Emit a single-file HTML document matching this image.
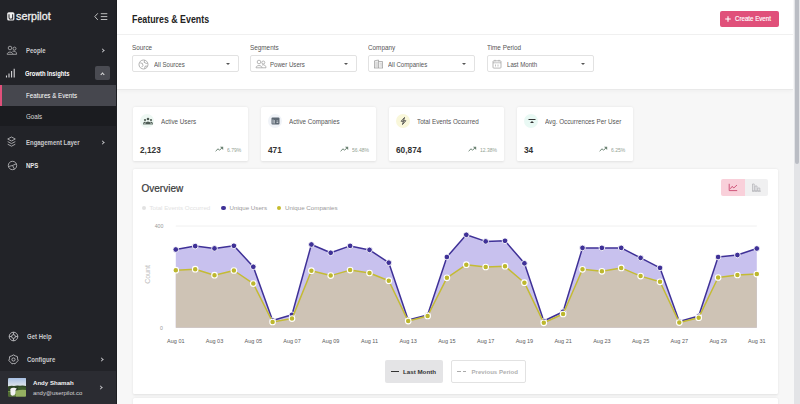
<!DOCTYPE html>
<html><head><meta charset="utf-8">
<style>
*{margin:0;padding:0;box-sizing:border-box}
html,body{width:800px;height:404px;overflow:hidden;background:#f7f7f7;font-family:"Liberation Sans",sans-serif}
.a{position:absolute;white-space:nowrap}
#sb{position:absolute;left:0;top:0;width:117px;height:404px;background:#222328}
.nav{position:absolute;left:25.7px;font-size:6.5px;font-weight:bold;color:#c9c9cc;line-height:8px;transform:scaleX(0.92);transform-origin:0 0}
.chev{position:absolute;width:3px;height:3px;border-right:1px solid #c0c0c4;border-top:1px solid #c0c0c4;transform:rotate(45deg)}
#hdr{position:absolute;left:117px;top:0;width:676px;height:88.5px;background:#fff;box-shadow:0 1px 0 #e9e9e9,0 2px 4px rgba(0,0,0,.04)}
.lbl{position:absolute;font-size:6.7px;color:#555;line-height:8px;transform:scaleX(0.95);transform-origin:0 0}
.sel{position:absolute;top:55px;width:107px;height:17px;border:1px solid #e2e2e2;border-radius:2px;background:#fff}
.sel span{position:absolute;left:21px;top:5px;font-size:7px;color:#555;line-height:8px;transform:scaleX(0.87);transform-origin:0 0}
.caret{position:absolute;right:8px;top:7px;width:0;height:0;border-left:2.2px solid transparent;border-right:2.2px solid transparent;border-top:2.5px solid #555}
.card{position:absolute;top:107px;width:115px;height:54px;background:#fff;border-radius:1.5px;box-shadow:0 0.5px 2.5px rgba(0,0,0,.09)}
.card .ic{position:absolute;left:6.6px;top:6.6px;width:14.5px;height:14.5px;border-radius:50%}
.card .t{position:absolute;left:27.6px;top:10.8px;font-size:6.5px;color:#555;line-height:8px;transform:scaleX(0.965);transform-origin:0 0}
.card .v{position:absolute;left:7px;font-size:8.3px;font-weight:bold;color:#333;line-height:10px}
.card .p{position:absolute;font-size:5.8px;color:#94a394;line-height:6px;transform:scaleX(0.87);transform-origin:0 0}
#scroll{position:absolute;left:793px;top:0;width:7px;height:404px;background:#e3e4e7;border-left:1px solid #f7f7f8}
#thumb{position:absolute;left:794.6px;top:0;width:4.3px;height:164px;background:#babdc4;border-radius:0 0 2.3px 2.3px}
</style></head>
<body>
<div id="sb">
  <!-- logo -->
  <svg class="a" style="left:7.3px;top:12.3px" width="8" height="9" viewBox="0 0 8 9"><rect x="0.2" y="0.2" width="7.2" height="8.3" rx="1.6" fill="#f0f0f0"/><path d="M2 2.2 V5.6 Q2 7.3 3.8 7.3 Q5.6 7.3 5.6 5.6 V2.2" fill="none" stroke="#3a3a3e" stroke-width="1.1"/><path d="M5.6 5 V7.4" stroke="#3a3a3e" stroke-width="1.1"/></svg>
  <div class="a" style="left:15.6px;top:10.3px;font-size:11px;color:#f0f0f0;line-height:13px;-webkit-text-stroke:0.3px #f0f0f0;transform:scaleX(0.98);transform-origin:0 0">serpilot</div>
  <!-- collapse -->
  <svg class="a" style="left:93px;top:12px" width="16" height="10" viewBox="0 0 16 10">
    <path d="M4.8 1.3 L1.8 4.6 L4.8 7.9" fill="none" stroke="#d0d0d0" stroke-width="0.9"/>
    <path d="M7.8 1.7H14.3M7.8 4.6H14.3M7.8 7.5H14.3" stroke="#d0d0d0" stroke-width="0.9"/>
  </svg>
  <!-- People -->
  <svg class="a" style="left:6px;top:45px" width="12" height="11" viewBox="0 0 12 11">
    <circle cx="4" cy="3" r="1.8" fill="none" stroke="#b5b5b8" stroke-width="0.8"/>
    <circle cx="8.5" cy="3.6" r="1.5" fill="none" stroke="#b5b5b8" stroke-width="0.8"/>
    <path d="M1.2 9.3 C1.2 6.3 6.8 6.3 6.8 9.3 Z" fill="none" stroke="#b5b5b8" stroke-width="0.8"/>
    <path d="M6.5 6.3 C8.5 5.6 10.6 6.6 10.6 9.3 H6.8" fill="none" stroke="#b5b5b8" stroke-width="0.8"/>
  </svg>
  <div class="nav" style="top:46.5px">People</div>
  <div class="chev" style="left:100.5px;top:49.2px"></div>
  <!-- Growth insights -->
  <svg class="a" style="left:5px;top:68px" width="11" height="11" viewBox="0 0 11 11">
    <path d="M1.5 9.5V7.5M4 9.5V5.5M6.6 9.5V3M9.2 9.5V0.8" stroke="#d8d8da" stroke-width="1.1"/>
  </svg>
  <div class="nav" style="top:70px;color:#fff;left:24.6px;transform:scaleX(0.9)">Growth Insights</div>
  <div class="a" style="left:95px;top:66.2px;width:14.6px;height:14.3px;background:#4a4b52;border-radius:2px"></div>
  <div class="chev" style="left:100.8px;top:73px;transform:rotate(-45deg);border-color:#e0e0e0"></div>
  <!-- Features & Events active -->
  <div class="a" style="left:0;top:85.2px;width:117px;height:20.6px;background:#46474e"></div>
  <div class="a" style="left:0;top:85.2px;width:2px;height:20.6px;background:#e0507a"></div>
  <div class="nav" style="top:92px;color:#fff;font-weight:normal;font-size:6.6px;transform:scaleX(0.94)">Features &amp; Events</div>
  <!-- Goals -->
  <div class="a" style="left:0;top:105.8px;width:117px;height:20.4px;background:#1b1c20"></div>
  <div class="nav" style="top:112.5px;color:#d8d8d8;font-weight:normal;font-size:6.6px;transform:scaleX(0.94)">Goals</div>
  <!-- Engagement -->
  <svg class="a" style="left:7px;top:136px" width="10" height="12" viewBox="0 0 10 12">
    <path d="M4.5 1 L8.3 3 L4.5 5 L0.7 3 Z" fill="none" stroke="#c0c0c3" stroke-width="0.8"/>
    <path d="M0.7 5.6 L4.5 7.6 L8.3 5.6" fill="none" stroke="#c0c0c3" stroke-width="0.8"/>
    <path d="M0.7 8.2 L4.5 10.2 L8.3 8.2" fill="none" stroke="#c0c0c3" stroke-width="0.8"/>
  </svg>
  <div class="nav" style="top:139px">Engagement Layer</div>
  <div class="chev" style="left:100.5px;top:140.5px"></div>
  <!-- NPS -->
  <svg class="a" style="left:7px;top:159.5px" width="11" height="11" viewBox="0 0 11 11">
    <circle cx="5.5" cy="5.5" r="4.2" fill="none" stroke="#c0c0c3" stroke-width="0.8"/>
    <path d="M5.5 5.5 L9.3 3.8 M5.5 5.5 L7.5 9.2 M5.5 5.5 L1.5 6.5" stroke="#c0c0c3" stroke-width="0.8"/>
  </svg>
  <div class="nav" style="top:161.5px;color:#e8e8e8">NPS</div>
  <!-- Get help -->
  <svg class="a" style="left:8px;top:331px" width="11" height="11" viewBox="0 0 11 11">
    <circle cx="5.5" cy="5.5" r="4.3" fill="none" stroke="#c0c0c3" stroke-width="0.9"/>
    <circle cx="5.5" cy="5.5" r="1.9" fill="none" stroke="#c0c0c3" stroke-width="0.9"/>
    <path d="M5.5 1.2V3.6M5.5 7.4V9.8M1.2 5.5H3.6M7.4 5.5H9.8" stroke="#c0c0c3" stroke-width="0.9"/>
  </svg>
  <div class="nav" style="top:333px;left:27px">Get Help</div>
  <!-- Configure -->
  <svg class="a" style="left:8px;top:354px" width="11" height="11" viewBox="0 0 11 11">
    <path d="M5.5 0.9 L7.4 1.9 L9.4 2.6 L9.6 4.8 L10.1 6.6 L8.6 8.1 L7.1 9.8 L5.5 9.5 L3.9 9.8 L2.4 8.1 L0.9 6.6 L1.4 4.8 L1.6 2.6 L3.6 1.9 Z" fill="none" stroke="#c0c0c3" stroke-width="0.9"/>
    <circle cx="5.5" cy="5.5" r="1.6" fill="none" stroke="#c0c0c3" stroke-width="0.9"/>
  </svg>
  <div class="nav" style="top:355.5px;left:27px">Configure</div>
  <div class="chev" style="left:100px;top:358px"></div>
  <!-- user -->
  <div class="a" style="left:0;top:371px;width:117px;height:33px;background:#2b2c32"></div>
  <svg class="a" style="left:7.9px;top:378.2px" width="18.4" height="18.7" viewBox="0 0 18.4 18.7">
    <defs><clipPath id="av"><rect width="18.4" height="18.7" rx="1.5"/></clipPath>
    <linearGradient id="sky" x1="0" y1="0" x2="0" y2="1"><stop offset="0" stop-color="#a8c0e4"/><stop offset="1" stop-color="#e2e6ea"/></linearGradient></defs>
    <g clip-path="url(#av)">
      <rect width="18.4" height="18.7" fill="#6f8f45"/>
      <rect width="18.4" height="8.5" fill="url(#sky)"/>
      <path d="M0 8.5 Q3 7.2 6 8 Q9 7 12 7.8 Q15 7.3 18.4 8 V13 H0Z" fill="#2e4526"/>
      <path d="M10 9 Q14 8.5 18.4 9.5 V12 H10Z" fill="#3d5a2c"/>
      <path d="M8 12.5 Q13 11.5 18.4 12 V18.7 H8Z" fill="#95b061"/>
      <path d="M0 14 H6 V18.7 H0Z" fill="#4f6a33"/>
      <path d="M2.3 11 Q4 9.2 6.5 9.8 L8.8 10.6 L7.6 12 L7.5 15.5 Q6.5 18 4 17.8 L2.6 16.5 Z" fill="#f2f2f2"/>
    </g>
  </svg>
  <div class="a" style="left:33px;top:379px;font-size:6.1px;font-weight:bold;color:#f2f2f2;line-height:8px">Andy Shamah</div>
  <div class="a" style="left:33px;top:388.5px;font-size:5.95px;color:#d5d5d8;line-height:8px">andy@userpilot.co</div>
  <div class="chev" style="left:99.2px;top:385.7px"></div>
  <div class="a" style="left:115.6px;top:0;width:1.4px;height:404px;background:#1d1e22"></div>
</div>
<div style="position:absolute;left:117px;top:0;width:1px;height:404px;background:#f8f8f8"></div>

<!-- header -->
<div id="hdr">
  <div class="a" style="left:15px;top:13.8px;font-size:10.4px;font-weight:bold;color:#222;line-height:12px;transform:scaleX(0.85);transform-origin:0 0">Features &amp; Events</div>
  <div class="a" style="left:0;top:33.5px;width:677px;height:1px;background:#f0f0f0"></div>
  <div class="a" style="left:602.5px;top:11px;width:59.5px;height:15.5px;background:#e0507a;border-radius:2px"></div>
  <svg class="a" style="left:607px;top:14.6px" width="8" height="8" viewBox="0 0 8 8"><path d="M4 1.2V6.8M1.2 4H6.8" stroke="#fff" stroke-width="1.1"/></svg>
  <div class="a" style="left:618px;top:14.6px;font-size:6.7px;color:#fff;line-height:8px;transform:scaleX(0.92);transform-origin:0 0;-webkit-text-stroke:0.15px #fff">Create Event</div>

  <div class="lbl" style="left:15px;top:43.5px">Source</div>
  <div class="lbl" style="left:133px;top:43.5px">Segments</div>
  <div class="lbl" style="left:251px;top:43.5px">Company</div>
  <div class="lbl" style="left:370px;top:43.5px">Time Period</div>
</div>
<div class="sel" style="left:132px"><span>All Sources</span><div class="caret"></div>
  <svg class="a" style="left:4.5px;top:2.8px" width="11" height="11" viewBox="0 0 10 10"><circle cx="5" cy="5" r="4.1" fill="none" stroke="#999" stroke-width="0.7"/><path d="M2 3.5 L4 4 L4.5 6 L3.2 7.5 M6 1.3 L5.5 3 L7.5 4 L8.8 3.8 M6 8.7 L6.5 6.5 L8.5 6.5" fill="none" stroke="#999" stroke-width="0.7"/></svg>
</div>
<div class="sel" style="left:250px"><span style="left:18.5px">Power Users</span><div class="caret"></div>
  <svg class="a" style="left:4px;top:3px" width="12" height="10" viewBox="0 0 12 10"><circle cx="4" cy="3" r="1.8" fill="none" stroke="#999" stroke-width="0.7"/><circle cx="8.3" cy="3.5" r="1.5" fill="none" stroke="#999" stroke-width="0.7"/><path d="M1 8.8 C1 5.8 7 5.8 7 8.8 Z M7 6 C9 5.3 11 6.3 11 8.8 H7" fill="none" stroke="#999" stroke-width="0.7"/></svg>
</div>
<div class="sel" style="left:368px"><span style="left:19px">All Companies</span><div class="caret"></div>
  <svg class="a" style="left:4px;top:3px" width="12" height="10" viewBox="0 0 12 10"><path d="M1.5 9V1.8L5.5 1V9M5.5 2.5H9.5V9M1 9H10" fill="#eee" stroke="#999" stroke-width="0.7"/><path d="M3 3V8M4.2 3V8M7 4V8M8.2 4V8" stroke="#bbb" stroke-width="0.5"/></svg>
</div>
<div class="sel" style="left:487px;width:106.5px"><span style="left:19px">Last Month</span><div class="caret"></div>
  <svg class="a" style="left:4px;top:3px" width="10" height="10" viewBox="0 0 10 10"><rect x="1" y="1.8" width="8" height="7.3" rx="0.8" fill="none" stroke="#999" stroke-width="0.7"/><path d="M1 3.8H9M3 0.8V2.5M7 0.8V2.5M3.5 5.5V7.5M6 5.5V7.5" stroke="#999" stroke-width="0.6"/></svg>
</div>

<!-- metric cards -->
<div class="card" style="left:133px">
  <div class="ic" style="background:#eef8f3"></div>
  <svg class="a" style="left:9.5px;top:10px" width="10" height="8" viewBox="0 0 10 8"><circle cx="5" cy="2" r="1.3" fill="#4d5b53"/><circle cx="2" cy="3" r="1.1" fill="#4d5b53"/><circle cx="8" cy="3" r="1.1" fill="#4d5b53"/><path d="M2.5 7 C2.5 3.8 7.5 3.8 7.5 7Z M0 7 C0 4.8 2.5 4.5 3 5.2 M10 7 C10 4.8 7.5 4.5 7 5.2" fill="#4d5b53"/><path d="M0 7H10" stroke="#4d5b53" stroke-width="0.8"/></svg>
  <div class="t">Active Users</div>
  <div class="v" style="top:37.6px">2,123</div>
  <svg class="a" style="left:82px;top:38.5px" width="9" height="6" viewBox="0 0 9 6"><path d="M0.6 5.2 L3 2.8 L4.6 4.2 L7.2 1.6" fill="none" stroke="#6a8272" stroke-width="1"/><path d="M5 0.8 H8.2 V4 Z" fill="#6a8272"/></svg>
  <div class="p" style="left:94px;top:39.5px">6.79%</div>
</div>
<div class="card" style="left:261px">
  <div class="ic" style="background:#f0f3f8"></div>
  <svg class="a" style="left:10px;top:9.5px" width="9" height="8" viewBox="0 0 9 8"><rect x="0.5" y="0.5" width="8" height="7" rx="1" fill="#5d6873"/><path d="M2 2.5V6.5M3.3 3V6.5M5.5 4H7.3M5.5 5.5H7.3" stroke="#e8ecf0" stroke-width="0.7"/></svg>
  <div class="t">Active Companies</div>
  <div class="v" style="top:37.6px">471</div>
  <svg class="a" style="left:79px;top:38.5px" width="9" height="6" viewBox="0 0 9 6"><path d="M0.6 5.2 L3 2.8 L4.6 4.2 L7.2 1.6" fill="none" stroke="#6a8272" stroke-width="1"/><path d="M5 0.8 H8.2 V4 Z" fill="#6a8272"/></svg>
  <div class="p" style="left:91px;top:39.5px">56.48%</div>
</div>
<div class="card" style="left:389px">
  <div class="ic" style="background:#f9f7da"></div>
  <svg class="a" style="left:11px;top:9.5px" width="7" height="8" viewBox="0 0 7 8"><path d="M4.5 0.5 L1.2 4.3 H3.5 L2.5 7.5 L5.8 3.7 H3.5 Z" fill="none" stroke="#444" stroke-width="0.9" stroke-linejoin="round"/></svg>
  <div class="t">Total Events Occurred</div>
  <div class="v" style="top:37.6px">60,874</div>
  <svg class="a" style="left:79px;top:38.5px" width="9" height="6" viewBox="0 0 9 6"><path d="M0.6 5.2 L3 2.8 L4.6 4.2 L7.2 1.6" fill="none" stroke="#6a8272" stroke-width="1"/><path d="M5 0.8 H8.2 V4 Z" fill="#6a8272"/></svg>
  <div class="p" style="left:91px;top:39.5px">12.38%</div>
</div>
<div class="card" style="left:517px;width:116px">
  <div class="ic" style="background:#e9f9f4"></div>
  <svg class="a" style="left:11px;top:9.5px" width="8" height="8" viewBox="0 0 8 8"><path d="M0.5 2.5H7.5" stroke="#333" stroke-width="1"/><path d="M2 6 L4 4 L6 6Z" fill="#333"/></svg>
  <div class="t">Avg. Occurrences Per User</div>
  <div class="v" style="top:37.6px">34</div>
  <svg class="a" style="left:82px;top:38.5px" width="9" height="6" viewBox="0 0 9 6"><path d="M0.6 5.2 L3 2.8 L4.6 4.2 L7.2 1.6" fill="none" stroke="#6a8272" stroke-width="1"/><path d="M5 0.8 H8.2 V4 Z" fill="#6a8272"/></svg>
  <div class="p" style="left:94px;top:39.5px">6.25%</div>
</div>

<!-- chart card -->
<div class="a" style="left:132.5px;top:169.4px;width:645.7px;height:224.6px;background:#fff;border-radius:1.5px;box-shadow:0 0.5px 2.5px rgba(0,0,0,.09)"></div>
<div class="a" style="left:141.5px;top:182.5px;font-size:10px;color:#3a3a3a;line-height:12px;-webkit-text-stroke:0.2px #3a3a3a">Overview</div>
<div class="a" style="left:721px;top:178.8px;width:24px;height:16.8px;background:#f9d0da;border-radius:2px 0 0 2px"></div>
<div class="a" style="left:745px;top:178.8px;width:23.3px;height:16.8px;background:#f0f0f1;border-radius:0 2px 2px 0"></div>
<svg class="a" style="left:727px;top:182px" width="12" height="10" viewBox="0 0 12 10"><path d="M2.2 1.8V8.6H10.2" fill="none" stroke="#c9486f" stroke-width="0.9"/><path d="M3.4 6.8 L5 4.4 L6.9 5.9 L10 3" fill="none" stroke="#c9486f" stroke-width="0.9"/></svg>
<svg class="a" style="left:751px;top:182px" width="12" height="10" viewBox="0 0 12 10"><path d="M1.5 2H3.2V9H1.5Z M4 4H6V9H4Z M6.8 6H8.8V9H6.8Z" fill="none" stroke="#b0b0b4" stroke-width="0.7"/><path d="M1 9.2H10" stroke="#b0b0b4" stroke-width="0.7"/></svg>
<!-- legend -->
<div class="a" style="left:142px;top:205.9px;width:4.4px;height:4.4px;border-radius:50%;background:#e2e2e2"></div>
<div class="a" style="left:149.4px;top:204.4px;font-size:6.2px;color:#e2e2e2;line-height:7px">Total Events Occurred</div>
<div class="a" style="left:221.3px;top:205.9px;width:4.4px;height:4.4px;border-radius:50%;background:#3f3197"></div>
<div class="a" style="left:229.5px;top:204.4px;font-size:6.2px;color:#9a9a9a;line-height:7px">Unique Users</div>
<div class="a" style="left:276.6px;top:205.9px;width:4.4px;height:4.4px;border-radius:50%;background:#c6bc2e"></div>
<div class="a" style="left:285px;top:204.4px;font-size:6.2px;color:#9a9a9a;line-height:7px">Unique Companies</div>

<svg id="chart" class="a" style="left:0;top:0" width="800" height="404" viewBox="0 0 800 404">
<line x1="175.8" y1="226.0" x2="756.8" y2="226.0" stroke="#ececec" stroke-width="0.8"/>
<text x="159" y="228" font-size="5.2" fill="#999" text-anchor="middle" font-family="Liberation Sans">400</text>
<text x="161.5" y="330" font-size="5.2" fill="#999" text-anchor="middle" font-family="Liberation Sans">0</text>
<text x="150" y="274.5" font-size="7" fill="#bdbdbd" text-anchor="middle" font-family="Liberation Sans" transform="rotate(-90 150 274.5)">Count</text>
<polygon points="175.8,327.7 175.8,249.5 195.2,246.1 214.5,248.4 233.9,245.8 253.3,266.8 272.6,320.5 292.0,314.8 311.4,244.5 330.7,252.8 350.1,245.9 369.5,249.9 388.8,262.7 408.2,320.0 427.6,315.0 446.9,257.0 466.3,234.8 485.7,241.4 505.0,240.8 524.4,263.3 543.8,321.0 563.1,311.7 582.5,247.9 601.9,247.9 621.2,247.9 640.6,257.9 660.0,267.9 679.3,321.5 698.7,316.0 718.1,257.0 737.4,255.0 756.8,248.5 756.8,327.7" fill="#c8c1ee"/>
<polygon points="175.8,327.7 175.8,270.2 195.2,269.2 214.5,275.2 233.9,270.5 253.3,283.6 272.6,322.0 292.0,318.6 311.4,270.7 330.7,275.6 350.1,270.1 369.5,273.0 388.8,280.7 408.2,321.1 427.6,316.0 446.9,277.8 466.3,264.7 485.7,267.0 505.0,266.2 524.4,282.7 543.8,322.8 563.1,314.0 582.5,269.3 601.9,271.3 621.2,267.9 640.6,276.1 660.0,281.8 679.3,322.6 698.7,317.7 718.1,277.5 737.4,275.0 756.8,274.1 756.8,327.7" fill="#cec3b5"/>
<polyline points="175.8,249.5 195.2,246.1 214.5,248.4 233.9,245.8 253.3,266.8 272.6,320.5 292.0,314.8 311.4,244.5 330.7,252.8 350.1,245.9 369.5,249.9 388.8,262.7 408.2,320.0 427.6,315.0 446.9,257.0 466.3,234.8 485.7,241.4 505.0,240.8 524.4,263.3 543.8,321.0 563.1,311.7 582.5,247.9 601.9,247.9 621.2,247.9 640.6,257.9 660.0,267.9 679.3,321.5 698.7,316.0 718.1,257.0 737.4,255.0 756.8,248.5" fill="none" stroke="#3f3197" stroke-width="1.5" stroke-linejoin="round"/>
<circle cx="175.8" cy="249.5" r="2.85" fill="#3f3197" stroke="#fff" stroke-width="0.9"/>
<circle cx="195.2" cy="246.1" r="2.85" fill="#3f3197" stroke="#fff" stroke-width="0.9"/>
<circle cx="214.5" cy="248.4" r="2.85" fill="#3f3197" stroke="#fff" stroke-width="0.9"/>
<circle cx="233.9" cy="245.8" r="2.85" fill="#3f3197" stroke="#fff" stroke-width="0.9"/>
<circle cx="253.3" cy="266.8" r="2.85" fill="#3f3197" stroke="#fff" stroke-width="0.9"/>
<circle cx="272.6" cy="320.5" r="2.85" fill="#3f3197" stroke="#fff" stroke-width="0.9"/>
<circle cx="292.0" cy="314.8" r="2.85" fill="#3f3197" stroke="#fff" stroke-width="0.9"/>
<circle cx="311.4" cy="244.5" r="2.85" fill="#3f3197" stroke="#fff" stroke-width="0.9"/>
<circle cx="330.7" cy="252.8" r="2.85" fill="#3f3197" stroke="#fff" stroke-width="0.9"/>
<circle cx="350.1" cy="245.9" r="2.85" fill="#3f3197" stroke="#fff" stroke-width="0.9"/>
<circle cx="369.5" cy="249.9" r="2.85" fill="#3f3197" stroke="#fff" stroke-width="0.9"/>
<circle cx="388.8" cy="262.7" r="2.85" fill="#3f3197" stroke="#fff" stroke-width="0.9"/>
<circle cx="408.2" cy="320.0" r="2.85" fill="#3f3197" stroke="#fff" stroke-width="0.9"/>
<circle cx="427.6" cy="315.0" r="2.85" fill="#3f3197" stroke="#fff" stroke-width="0.9"/>
<circle cx="446.9" cy="257.0" r="2.85" fill="#3f3197" stroke="#fff" stroke-width="0.9"/>
<circle cx="466.3" cy="234.8" r="2.85" fill="#3f3197" stroke="#fff" stroke-width="0.9"/>
<circle cx="485.7" cy="241.4" r="2.85" fill="#3f3197" stroke="#fff" stroke-width="0.9"/>
<circle cx="505.0" cy="240.8" r="2.85" fill="#3f3197" stroke="#fff" stroke-width="0.9"/>
<circle cx="524.4" cy="263.3" r="2.85" fill="#3f3197" stroke="#fff" stroke-width="0.9"/>
<circle cx="543.8" cy="321.0" r="2.85" fill="#3f3197" stroke="#fff" stroke-width="0.9"/>
<circle cx="563.1" cy="311.7" r="2.85" fill="#3f3197" stroke="#fff" stroke-width="0.9"/>
<circle cx="582.5" cy="247.9" r="2.85" fill="#3f3197" stroke="#fff" stroke-width="0.9"/>
<circle cx="601.9" cy="247.9" r="2.85" fill="#3f3197" stroke="#fff" stroke-width="0.9"/>
<circle cx="621.2" cy="247.9" r="2.85" fill="#3f3197" stroke="#fff" stroke-width="0.9"/>
<circle cx="640.6" cy="257.9" r="2.85" fill="#3f3197" stroke="#fff" stroke-width="0.9"/>
<circle cx="660.0" cy="267.9" r="2.85" fill="#3f3197" stroke="#fff" stroke-width="0.9"/>
<circle cx="679.3" cy="321.5" r="2.85" fill="#3f3197" stroke="#fff" stroke-width="0.9"/>
<circle cx="698.7" cy="316.0" r="2.85" fill="#3f3197" stroke="#fff" stroke-width="0.9"/>
<circle cx="718.1" cy="257.0" r="2.85" fill="#3f3197" stroke="#fff" stroke-width="0.9"/>
<circle cx="737.4" cy="255.0" r="2.85" fill="#3f3197" stroke="#fff" stroke-width="0.9"/>
<circle cx="756.8" cy="248.5" r="2.85" fill="#3f3197" stroke="#fff" stroke-width="0.9"/>
<polyline points="175.8,270.2 195.2,269.2 214.5,275.2 233.9,270.5 253.3,283.6 272.6,322.0 292.0,318.6 311.4,270.7 330.7,275.6 350.1,270.1 369.5,273.0 388.8,280.7 408.2,321.1 427.6,316.0 446.9,277.8 466.3,264.7 485.7,267.0 505.0,266.2 524.4,282.7 543.8,322.8 563.1,314.0 582.5,269.3 601.9,271.3 621.2,267.9 640.6,276.1 660.0,281.8 679.3,322.6 698.7,317.7 718.1,277.5 737.4,275.0 756.8,274.1" fill="none" stroke="#c4bb34" stroke-width="1.5" stroke-linejoin="round"/>
<circle cx="175.8" cy="270.2" r="2.8" fill="#bdb72e" stroke="#fff" stroke-width="1.1"/>
<circle cx="195.2" cy="269.2" r="2.8" fill="#bdb72e" stroke="#fff" stroke-width="1.1"/>
<circle cx="214.5" cy="275.2" r="2.8" fill="#bdb72e" stroke="#fff" stroke-width="1.1"/>
<circle cx="233.9" cy="270.5" r="2.8" fill="#bdb72e" stroke="#fff" stroke-width="1.1"/>
<circle cx="253.3" cy="283.6" r="2.8" fill="#bdb72e" stroke="#fff" stroke-width="1.1"/>
<circle cx="272.6" cy="322.0" r="2.8" fill="#bdb72e" stroke="#fff" stroke-width="1.1"/>
<circle cx="292.0" cy="318.6" r="2.8" fill="#bdb72e" stroke="#fff" stroke-width="1.1"/>
<circle cx="311.4" cy="270.7" r="2.8" fill="#bdb72e" stroke="#fff" stroke-width="1.1"/>
<circle cx="330.7" cy="275.6" r="2.8" fill="#bdb72e" stroke="#fff" stroke-width="1.1"/>
<circle cx="350.1" cy="270.1" r="2.8" fill="#bdb72e" stroke="#fff" stroke-width="1.1"/>
<circle cx="369.5" cy="273.0" r="2.8" fill="#bdb72e" stroke="#fff" stroke-width="1.1"/>
<circle cx="388.8" cy="280.7" r="2.8" fill="#bdb72e" stroke="#fff" stroke-width="1.1"/>
<circle cx="408.2" cy="321.1" r="2.8" fill="#bdb72e" stroke="#fff" stroke-width="1.1"/>
<circle cx="427.6" cy="316.0" r="2.8" fill="#bdb72e" stroke="#fff" stroke-width="1.1"/>
<circle cx="446.9" cy="277.8" r="2.8" fill="#bdb72e" stroke="#fff" stroke-width="1.1"/>
<circle cx="466.3" cy="264.7" r="2.8" fill="#bdb72e" stroke="#fff" stroke-width="1.1"/>
<circle cx="485.7" cy="267.0" r="2.8" fill="#bdb72e" stroke="#fff" stroke-width="1.1"/>
<circle cx="505.0" cy="266.2" r="2.8" fill="#bdb72e" stroke="#fff" stroke-width="1.1"/>
<circle cx="524.4" cy="282.7" r="2.8" fill="#bdb72e" stroke="#fff" stroke-width="1.1"/>
<circle cx="543.8" cy="322.8" r="2.8" fill="#bdb72e" stroke="#fff" stroke-width="1.1"/>
<circle cx="563.1" cy="314.0" r="2.8" fill="#bdb72e" stroke="#fff" stroke-width="1.1"/>
<circle cx="582.5" cy="269.3" r="2.8" fill="#bdb72e" stroke="#fff" stroke-width="1.1"/>
<circle cx="601.9" cy="271.3" r="2.8" fill="#bdb72e" stroke="#fff" stroke-width="1.1"/>
<circle cx="621.2" cy="267.9" r="2.8" fill="#bdb72e" stroke="#fff" stroke-width="1.1"/>
<circle cx="640.6" cy="276.1" r="2.8" fill="#bdb72e" stroke="#fff" stroke-width="1.1"/>
<circle cx="660.0" cy="281.8" r="2.8" fill="#bdb72e" stroke="#fff" stroke-width="1.1"/>
<circle cx="679.3" cy="322.6" r="2.8" fill="#bdb72e" stroke="#fff" stroke-width="1.1"/>
<circle cx="698.7" cy="317.7" r="2.8" fill="#bdb72e" stroke="#fff" stroke-width="1.1"/>
<circle cx="718.1" cy="277.5" r="2.8" fill="#bdb72e" stroke="#fff" stroke-width="1.1"/>
<circle cx="737.4" cy="275.0" r="2.8" fill="#bdb72e" stroke="#fff" stroke-width="1.1"/>
<circle cx="756.8" cy="274.1" r="2.8" fill="#bdb72e" stroke="#fff" stroke-width="1.1"/>
<text x="175.8" y="343" font-size="5.5" fill="#5a5a5a" text-anchor="middle" font-family="Liberation Sans">Aug 01</text>
<text x="214.5" y="343" font-size="5.5" fill="#5a5a5a" text-anchor="middle" font-family="Liberation Sans">Aug 03</text>
<text x="253.3" y="343" font-size="5.5" fill="#5a5a5a" text-anchor="middle" font-family="Liberation Sans">Aug 05</text>
<text x="292.0" y="343" font-size="5.5" fill="#5a5a5a" text-anchor="middle" font-family="Liberation Sans">Aug 07</text>
<text x="330.7" y="343" font-size="5.5" fill="#5a5a5a" text-anchor="middle" font-family="Liberation Sans">Aug 09</text>
<text x="369.5" y="343" font-size="5.5" fill="#5a5a5a" text-anchor="middle" font-family="Liberation Sans">Aug 11</text>
<text x="408.2" y="343" font-size="5.5" fill="#5a5a5a" text-anchor="middle" font-family="Liberation Sans">Aug 13</text>
<text x="446.9" y="343" font-size="5.5" fill="#5a5a5a" text-anchor="middle" font-family="Liberation Sans">Aug 15</text>
<text x="485.7" y="343" font-size="5.5" fill="#5a5a5a" text-anchor="middle" font-family="Liberation Sans">Aug 17</text>
<text x="524.4" y="343" font-size="5.5" fill="#5a5a5a" text-anchor="middle" font-family="Liberation Sans">Aug 19</text>
<text x="563.1" y="343" font-size="5.5" fill="#5a5a5a" text-anchor="middle" font-family="Liberation Sans">Aug 21</text>
<text x="601.9" y="343" font-size="5.5" fill="#5a5a5a" text-anchor="middle" font-family="Liberation Sans">Aug 23</text>
<text x="640.6" y="343" font-size="5.5" fill="#5a5a5a" text-anchor="middle" font-family="Liberation Sans">Aug 25</text>
<text x="679.3" y="343" font-size="5.5" fill="#5a5a5a" text-anchor="middle" font-family="Liberation Sans">Aug 27</text>
<text x="718.1" y="343" font-size="5.5" fill="#5a5a5a" text-anchor="middle" font-family="Liberation Sans">Aug 29</text>
<text x="756.8" y="343" font-size="5.5" fill="#5a5a5a" text-anchor="middle" font-family="Liberation Sans">Aug 31</text>
</svg>

<!-- bottom buttons -->
<div class="a" style="left:385px;top:360px;width:58px;height:22.5px;background:#e4e4e6;border-radius:2px"></div>
<div class="a" style="left:390.5px;top:370.5px;width:8.5px;height:1.2px;background:#333"></div>
<div class="a" style="left:403px;top:367.5px;font-size:6.2px;font-weight:bold;color:#333;line-height:8px">Last Month</div>
<div class="a" style="left:450.5px;top:360px;width:75px;height:22.5px;background:#fff;border:1px solid #e2e2e2;border-radius:2px"></div>
<div class="a" style="left:457px;top:370.5px;width:3.5px;height:1.1px;background:#aaa"></div>
<div class="a" style="left:462.5px;top:370.5px;width:3.5px;height:1.1px;background:#aaa"></div>
<div class="a" style="left:471.5px;top:367.5px;font-size:6.1px;font-weight:bold;color:#b0b0b0;line-height:8px">Previous Period</div>

<!-- next card -->
<div class="a" style="left:132.5px;top:397.5px;width:645.7px;height:20px;background:#fff;border-radius:1.5px;box-shadow:0 0.5px 2.5px rgba(0,0,0,.09)"></div>

<div id="scroll"></div>
<div id="thumb"></div>
</body></html>
